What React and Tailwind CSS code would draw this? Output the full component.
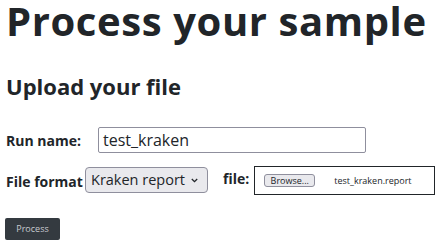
export default function App() {
  const font = { fontFamily: '"Open Sans", "Noto Sans", sans-serif' };
  return (
    <div className="w-[444px] h-[248px] bg-white text-[#212529] overflow-hidden pl-[6px]" style={font}>
      <h1 className="text-[40px] leading-[42px] font-bold tracking-[0.6px] whitespace-nowrap">Process your sample</h1>
      <h2 className="text-[22px] leading-[30px] font-bold mt-[29px] whitespace-nowrap">Upload your file</h2>
      <div className="flex items-center mt-[26px] h-[26px]">
        <span className="text-[14px] font-bold w-[92px] shrink-0 whitespace-nowrap">Run name:</span>
        <div className="w-[268px] shrink-0 h-[26px] border border-[#8f8f9d] rounded-[2px] flex items-center pl-[4px] text-[16px] whitespace-nowrap">test_kraken</div>
      </div>
      <div className="flex items-start mt-[13px]">
        <span className="text-[14px] font-bold w-[79px] shrink-0 mt-[5px] whitespace-nowrap">File format</span>
        <div className="w-[123px] shrink-0 h-[26px] mt-[1px] border border-[#8f8f9d] rounded-[4px] bg-[#e9e9ed] flex items-center pl-[5px] pr-[9px] justify-between text-[14.5px] whitespace-nowrap">
          <span>Kraken report</span>
          <svg width="7" height="5" viewBox="0 0 7 5" className="mt-[1px] shrink-0"><path d="M0.8 1 L3.5 3.7 L6.2 1" fill="none" stroke="#212529" strokeWidth="1.3" /></svg>
        </div>
        <span className="text-[14px] font-bold ml-[15px] mr-[5px] mt-[2px] whitespace-nowrap">file:</span>
        <div className="w-[181px] shrink-0 h-[29px] border border-[#212529] flex items-center pl-[9px] whitespace-nowrap">
          <div className="h-[13px] w-[51px] border border-[#8f8f9d] rounded-[3px] bg-[#e9e9ed] flex items-center justify-center text-[9px] leading-none">Browse...</div>
          <span className="text-[9px] ml-[19px]">test_kraken.report</span>
        </div>
      </div>
      <button className="mt-[23px] ml-[-1px] w-[55px] h-[22px] bg-[#343a40] rounded-[2px] text-[9px] text-[#c8cbd0] flex items-center justify-center">Process</button>
    </div>
  );
}
